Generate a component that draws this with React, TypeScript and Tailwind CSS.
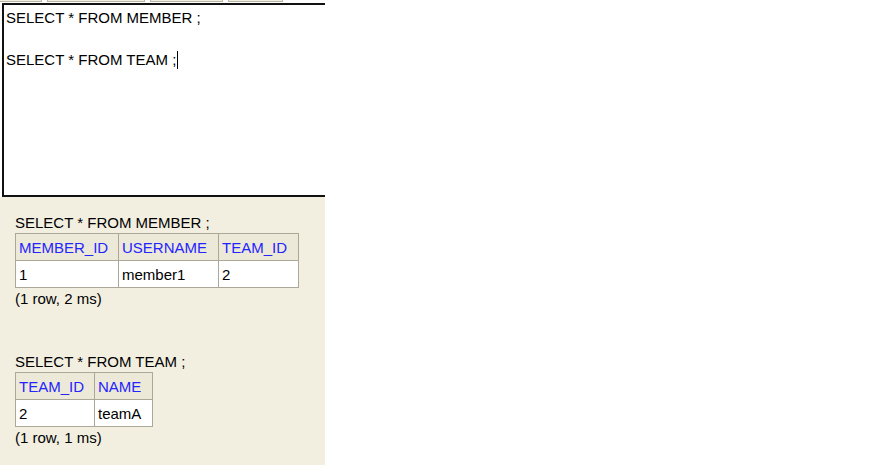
import React from "react";

const font = { fontFamily: '"Liberation Sans", Arial, sans-serif' };

function ResultTable({ cols, widths, row }: { cols: string[]; widths: string[]; row: string[] }) {
  return (
    <table className="border-collapse">
      <tbody>
        <tr>
          {cols.map((c, i) => (
            <th
              key={c}
              className={`${widths[i]} h-[27px] border border-[#aca899] bg-[#ece9d8] pl-[3px] text-left font-normal text-[#2424ff] leading-[21px]`}
            >
              {c}
            </th>
          ))}
        </tr>
        <tr>
          {row.map((c, i) => (
            <td
              key={i}
              className={`${widths[i]} h-[27px] border border-[#aca899] bg-white pl-[3px] text-left text-black leading-[21px]`}
            >
              {c}
            </td>
          ))}
        </tr>
      </tbody>
    </table>
  );
}

export default function App() {
  return (
    <div className="flex h-[465px] w-[896px] bg-white text-[15px] text-black" style={font}>
      <div className="flex w-[325px] flex-col overflow-hidden">
        {/* top toolbar remnants */}
        <div className="flex h-[3px] shrink-0 gap-[5px]">
          <div className="h-[2px] w-[42px] border-b border-r border-[#b8b4a4] bg-[#efeddf]" />
          <div className="h-[2px] w-[98px] border-b border-l border-r border-[#b8b4a4] bg-[#efeddf]" />
          <div className="h-[2px] w-[73px] border-b border-l border-r border-[#b8b4a4] bg-[#efeddf]" />
          <div className="h-[2px] w-[55px] border-b border-l border-r border-[#b8b4a4] bg-[#efeddf]" />
        </div>
        {/* query editor */}
        <div className="ml-[2px] h-[194px] w-[400px] shrink-0 border-2 border-[#111111] bg-white pl-[2px] pt-[2px] leading-[21px]">
          <div className="whitespace-pre">SELECT * FROM MEMBER ;</div>
          <div className="h-[21px]" />
          <div className="flex items-center whitespace-pre">
            <span>SELECT * FROM TEAM ;</span>
            <span className="ml-px inline-block h-[18px] w-px bg-black" />
          </div>
        </div>
        {/* results */}
        <div className="flex-1 bg-[#f2efe1] pl-[15px] pt-[15px] leading-[21px]">
          <div className="whitespace-pre">SELECT * FROM MEMBER ;</div>
          <ResultTable
            cols={["MEMBER_ID", "USERNAME", "TEAM_ID"]}
            widths={["w-[103px]", "w-[100px]", "w-[80px]"]}
            row={["1", "member1", "2"]}
          />
          <div>(1 row, 2 ms)</div>
          <div className="h-[42px]" />
          <div className="whitespace-pre">SELECT * FROM TEAM ;</div>
          <ResultTable
            cols={["TEAM_ID", "NAME"]}
            widths={["w-[79px]", "w-[58px]"]}
            row={["2", "teamA"]}
          />
          <div>(1 row, 1 ms)</div>
        </div>
      </div>
      <div className="flex-1" />
    </div>
  );
}
